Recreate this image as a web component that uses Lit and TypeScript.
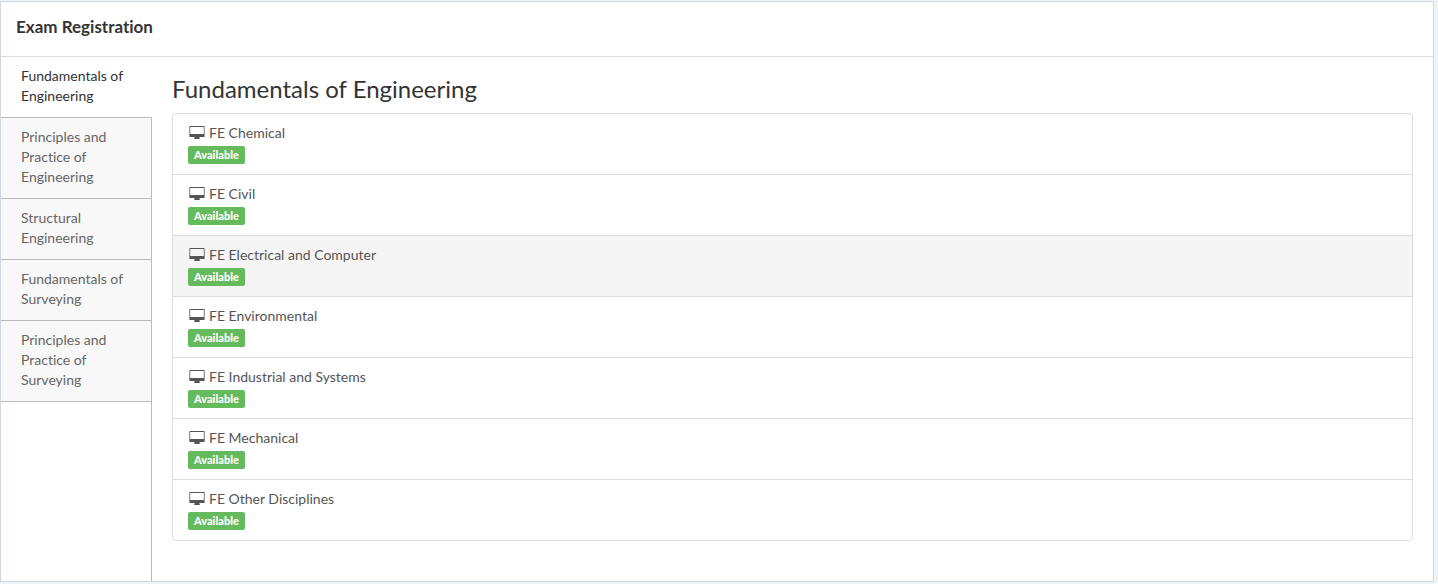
import { LitElement, html, css, svg } from "lit";
import { customElement, state } from "lit/decorators.js";
import { classMap } from "lit/directives/class-map.js";

interface ExamGroup {
  name: string;
  exams: string[];
}

const GROUPS: ExamGroup[] = [
  {
    name: "Fundamentals of Engineering",
    exams: [
      "FE Chemical",
      "FE Civil",
      "FE Electrical and Computer",
      "FE Environmental",
      "FE Industrial and Systems",
      "FE Mechanical",
      "FE Other Disciplines",
    ],
  },
  { name: "Principles and Practice of Engineering", exams: [] },
  { name: "Structural Engineering", exams: [] },
  { name: "Fundamentals of Surveying", exams: [] },
  { name: "Principles and Practice of Surveying", exams: [] },
];

const monitor = svg`
  <path fill-rule="evenodd" d="M1 0H15Q15.6 0 15.6 .6V10.4Q15.6 11 15 11H10.5V12L11 13H5L5.5 12V11H1Q.4 11 .4 10.4V.6Q.4 0 1 0ZM1.2 1V8H14.8V1Z"/>
`;

@customElement("app-root")
export class AppRoot extends LitElement {
  @state() private selected = 0;
  @state() private current = "FE Electrical and Computer";

  static styles = css`
    :host {
      display: block;
      box-sizing: border-box;
      min-height: 100vh;
      padding: 1px 4px 2px 0;
      background: #f0f4f7;
      color: #333;
      font: 14px/20px Lato, "Liberation Sans", sans-serif;
      font-variant-ligatures: none;
    }
    * {
      box-sizing: border-box;
    }
    .panel {
      display: flex;
      flex-direction: column;
      min-height: calc(100vh - 3px);
      background: #fff;
      border: 1px solid #d0d7e2;
    }
    .header {
      padding: 13px 15px 17px;
      border-bottom: 1px solid #ddd;
    }
    .title {
      margin: 0;
      font-size: 17px;
      line-height: 24px;
      font-weight: 700;
    }
    .body {
      display: flex;
      flex: 1;
    }
    .side {
      display: flex;
      flex-direction: column;
      flex: none;
      width: 151px;
    }
    .tab {
      margin: 0;
      padding: 9px 20px 11px;
      border: 0 solid #bbb;
      border-width: 0 1px 1px 0;
      background: #f8f8f8;
      color: #666;
      font: inherit;
      text-align: left;
      cursor: pointer;
    }
    .tab.active {
      border-right-color: transparent;
      background: #fff;
      color: #333;
    }
    .rest {
      flex: 1;
      border-right: 1px solid #bbb;
    }
    .main {
      flex: 1;
      min-width: 0;
      padding: 19px 20px 40px;
    }
    .heading {
      margin: 0 0 11px;
      font-size: 24px;
      line-height: 26px;
      font-weight: 400;
    }
    .list {
      margin: 0;
      padding: 0;
      list-style: none;
      border: 1px solid #ddd;
      border-radius: 4px;
      overflow: hidden;
    }
    .item + .item {
      border-top: 1px solid #ddd;
    }
    .exam {
      display: flex;
      flex-direction: column;
      align-items: flex-start;
      gap: 3px;
      padding: 9px 15px 10px;
      color: #555;
      text-decoration: none;
    }
    .exam.current {
      background: #f5f5f5;
    }
    .name {
      display: flex;
      gap: 4px;
      padding-left: 1px;
    }
    .icon {
      width: 16px;
      height: 13px;
      margin-top: 3px;
      fill: #555;
    }
    .badge {
      height: 18px;
      padding: 0 6px;
      border-radius: 2px;
      background: #66ba5e;
      color: #fff;
      font: 900 11px/17px Lato, "Liberation Sans", sans-serif;
    }
  `;

  render() {
    const group = GROUPS[this.selected];
    return html`
      <section class="panel">
        <header class="header"><h1 class="title">Exam Registration</h1></header>
        <div class="body">
          <nav class="side">
            ${GROUPS.map(
              (g, i) => html`<button
                type="button"
                class=${classMap({ tab: true, active: i === this.selected })}
                @click=${() => (this.selected = i)}
              >${g.name}</button>`
            )}
            <div class="rest"></div>
          </nav>
          <main class="main">
            <h2 class="heading">${group.name}</h2>
            <ul class="list">
              ${group.exams.map(
                (exam) => html`<li class="item">
                  <a
                    href="#"
                    class=${classMap({ exam: true, current: exam === this.current })}
                    @mouseenter=${() => (this.current = exam)}
                  >
                    <span class="name">
                      <svg class="icon" viewBox="0 0 16 13" aria-hidden="true">${monitor}</svg>
                      ${exam}
                    </span>
                    <span class="badge">Available</span>
                  </a>
                </li>`
              )}
            </ul>
          </main>
        </div>
      </section>
    `;
  }
}
